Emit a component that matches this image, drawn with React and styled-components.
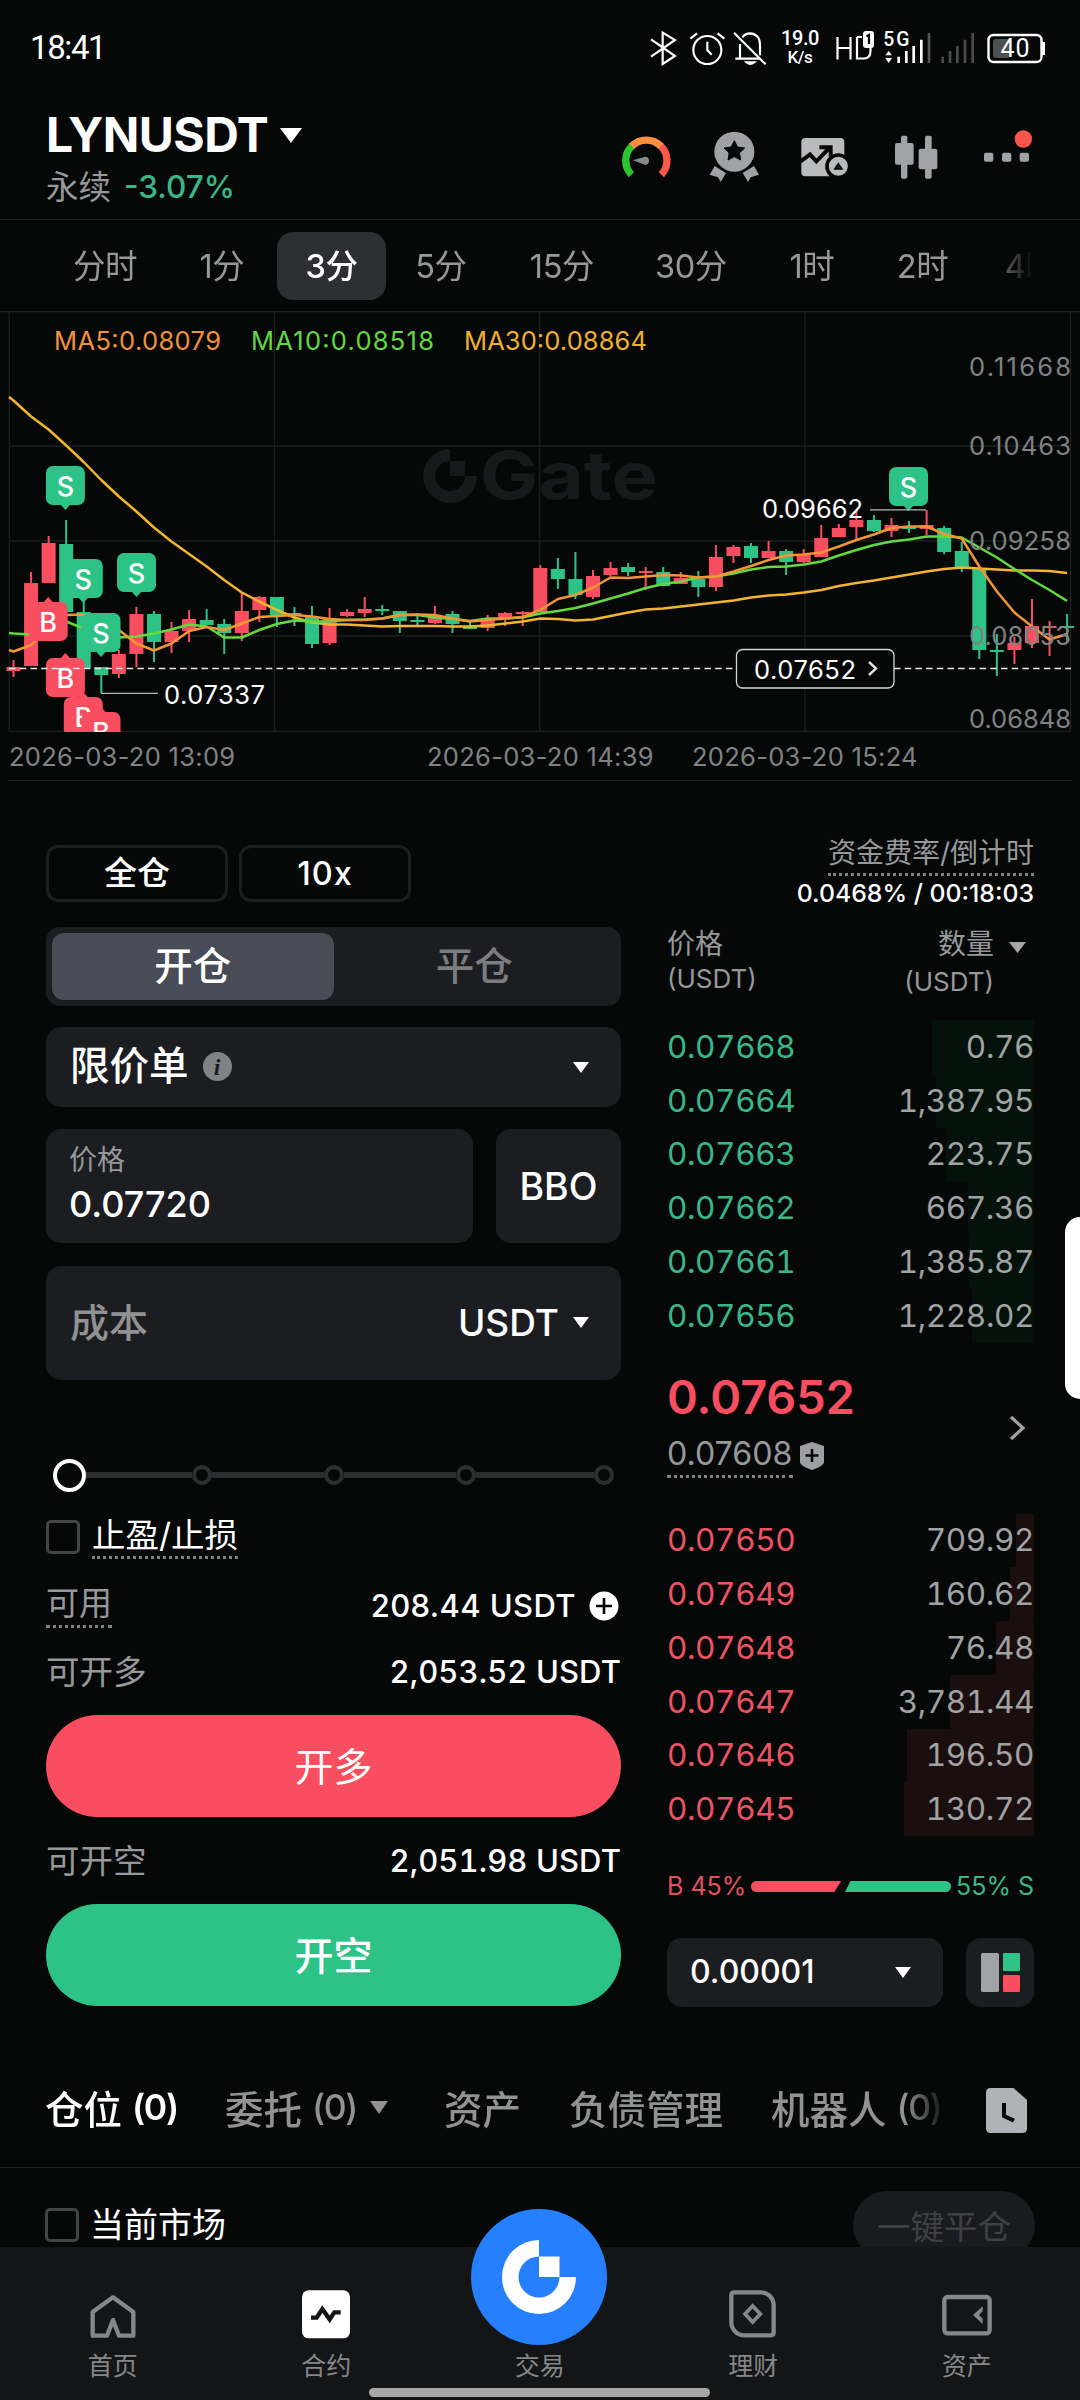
import React from "react";
import styled, { createGlobalStyle, css } from "styled-components";

const color = {
    bg: "#060808",
    panel: "#1c1d21",
    line: "#1d1f20",
    text: "#ffffff",
    muted: "#96989a",
    dim: "#7b7d80",
    red: "#f94e60",
    green: "#2dc386",
    greenText: "#3ab788",
};

const GlobalStyle = createGlobalStyle`
    * {
        box-sizing: border-box;
    }

    body {
        margin: 0;
        background: ${color.bg};
        color: ${color.text};
        font-family: Inter, "Noto Sans CJK SC", sans-serif;
    }

    svg {
        display: block;
        flex: none;
        overflow: visible;
    }
`;

const Page = styled.div`
    position: relative;
    width: 1080px;
    height: 2400px;
    overflow: hidden;
    background: ${color.bg};
`;

const Content = styled.main`
    height: 2247px;
    overflow: hidden;
`;

const Text = styled.span`
    display: inline-flex;
    align-items: center;
    white-space: pre;
    font-size: ${(p) => p.$size || 32}px;
    line-height: 1.2;
    font-weight: ${(p) => p.$weight || 400};
    letter-spacing: ${(p) => p.$ls || 0}px;
    color: ${(p) => p.$color || color.text};
    font-feature-settings: ${(p) => (p.$tnum ? '"tnum"' : "normal")};
`;

const Dotted = styled(Text)`
    height: ${(p) => p.$height || 44}px;
    border-bottom: 3px dotted #808284;
`;

/* status bar */

const StatusBar = styled.div`
    display: flex;
    align-items: center;
    justify-content: space-between;
    height: 94px;
    padding: 1px 35px 0 30px;
`;

const Clock = styled.span`
    font-family: Roboto, sans-serif;
    font-size: 33px;
    letter-spacing: -1.4px;
`;

const StatusIcons = styled.div`
    display: flex;
    align-items: center;
    height: 36px;
`;

const Speed = styled.div`
    width: 42px;
    margin: 0 15px 0 11px;
    font-family: Roboto, sans-serif;
    font-weight: 500;
    text-align: center;
    font-size: 20px;
    line-height: 19px;
    letter-spacing: -0.4px;

    small {
        display: block;
        font-size: 17px;
        line-height: 18px;
    }
`;

/* header */

const Header = styled.header`
    display: flex;
    align-items: center;
    justify-content: space-between;
    height: 126px;
    padding: 0 47px 0 46px;
    border-bottom: 1px solid ${color.line};
`;

const Pair = styled.div`
    display: flex;
    align-items: center;
    gap: 12px;
    height: 61px;
`;

const Change = styled.div`
    display: flex;
    align-items: center;
    gap: 13px;
    height: 43px;
`;

const Actions = styled.div`
    display: flex;
    gap: 40.5px;
`;

const Caret = styled.i`
    flex: none;
    width: 0;
    height: 0;
    border: ${(p) => p.$w / 2}px solid transparent;
    border-top: ${(p) => p.$h}px solid ${(p) => p.$color || "#fff"};
    border-bottom: 0;
`;

/* interval tabs */

const Intervals = styled.nav`
    display: flex;
    align-items: center;
    width: 1032px;
    height: 91px;
    padding-left: 43px;
    overflow: hidden;
    -webkit-mask-image: linear-gradient(90deg, #000 985px, transparent 1034px);
    mask-image: linear-gradient(90deg, #000 985px, transparent 1034px);
`;

const Interval = styled.span`
    flex: none;
    display: flex;
    align-items: center;
    justify-content: center;
    width: ${(p) => p.$width}px;
    height: 68px;
    padding-bottom: 4px;
    border-radius: 16px;
    font-size: 32.5px;
    letter-spacing: -0.4px;
    color: ${color.muted};
    ${(p) =>
        p.$active &&
        css`
            background: #2e2f33;
            color: #fff;
            font-weight: 500;
        `}
`;

/* chart */

const ChartSvg = styled.svg`
    overflow: hidden;
    font-family: Inter, sans-serif;
`;

const Dates = styled.div`
    display: flex;
    align-items: center;
    height: 49px;
    margin: 0 8px;
    padding: 3px 0 0 1px;
    border-bottom: 1px solid ${color.line};

    span {
        width: 225px;
    }

    span:nth-child(2) {
        margin: 0 40px 0 193px;
    }
`;

/* trade area */

const Trade = styled.section`
    display: grid;
    grid-template-columns: 575px 367px;
    column-gap: 46px;
    height: 1273px;
    padding: 0 46px;
`;

const Form = styled.div`
    padding-top: 64px;
`;

const Row = styled.div`
    display: flex;
    align-items: center;
    justify-content: ${(p) => (p.$between ? "space-between" : "flex-start")};
    gap: ${(p) => p.$gap || 0}px;
    height: ${(p) => (p.$height ? `${p.$height}px` : "auto")};
    margin-top: ${(p) => p.$mt || 0}px;
`;

const Outline = styled.div`
    display: flex;
    align-items: center;
    justify-content: center;
    width: ${(p) => p.$width}px;
    height: 57px;
    border: 3px solid #1c1e20;
    border-radius: 12px;
`;

const Segment = styled.div`
    display: flex;
    height: 79px;
    margin-top: 25px;
    padding: 6px;
    border-radius: 14px;
    background: ${color.panel};
`;

const SegmentItem = styled.div`
    flex: 1;
    display: flex;
    align-items: center;
    justify-content: center;
    border-radius: 12px;
    background: ${(p) => (p.$active ? "#484c56" : "transparent")};
`;

const Box = styled.div`
    display: flex;
    align-items: center;
    flex: ${(p) => (p.$width ? "none" : 1)};
    width: ${(p) => (p.$width ? `${p.$width}px` : "auto")};
    height: ${(p) => p.$height}px;
    margin-top: ${(p) => p.$mt || 0}px;
    padding: ${(p) => p.$pad || "0 32px 0 24px"};
    justify-content: ${(p) => p.$justify || "space-between"};
    border-radius: 15px;
    background: ${color.panel};
`;

const Field = styled.div`
    display: flex;
    flex-direction: column;
    justify-content: center;
    gap: 6px;
    width: 427px;
    height: 114px;
    padding: 0 23px 2px;
    border-radius: 15px;
    background: ${color.panel};
`;

const Info = styled.i`
    display: flex;
    align-items: center;
    justify-content: center;
    width: 29px;
    height: 29px;
    border-radius: 50%;
    background: #808287;
    color: ${color.panel};
    font: italic bold 24px/1 "Liberation Serif", serif;
`;

const Slider = styled.div`
    display: flex;
    align-items: center;
    height: 32px;
    margin: 79px 7px 0;
`;

const Handle = styled.span`
    width: 33px;
    height: 33px;
    border: 4px solid #fff;
    border-radius: 50%;
`;

const Track = styled.span`
    flex: ${(p) => p.$grow};
    height: 6px;
    background: #2d2f31;
`;

const Stop = styled.span`
    width: 20px;
    height: 20px;
    border: 4px solid #2d2f31;
    border-radius: 50%;
`;

const Checkbox = styled.span`
    width: 34px;
    height: 34px;
    border: 3px solid #424446;
    border-radius: 5px;
`;

const Submit = styled.button`
    display: block;
    width: 100%;
    height: 102px;
    margin-top: ${(p) => p.$mt}px;
    padding: 0;
    border: 0;
    border-radius: 51px;
    background: ${(p) => p.$bg};
    color: #fff;
    font: ${(p) => p.$weight || 500} 39px/1 Inter, "Noto Sans CJK SC", sans-serif;
`;

/* order book */

const Book = styled.div`
    padding-top: 53px;
`;

const Right = styled.div`
    display: flex;
    flex-direction: column;
    align-items: flex-end;
`;

const BookHead = styled.div`
    display: flex;
    justify-content: space-between;
    height: 75px;
    margin-top: 16px;
`;

const HeadCell = styled.div`
    display: flex;
    flex-direction: column;
    align-items: ${(p) => (p.$end ? "flex-end" : "flex-start")};
`;

const Level = styled.div`
    display: flex;
    align-items: center;
    justify-content: space-between;
    height: 53.75px;
    background: linear-gradient(${(p) => p.$bg}, ${(p) => p.$bg}) right / ${(p) => p.$depth}px 100% no-repeat;
`;

const Last = styled.div`
    display: flex;
    align-items: flex-start;
    justify-content: space-between;
    height: 116px;
    margin-top: 21px;
    padding: 5px 8px 0 0;
`;

const More = styled.svg`
    margin-top: 46px;
`;

const Ratio = styled.div`
    display: flex;
    align-items: center;
    justify-content: space-between;
    height: 30px;
    margin-top: 35px;
`;

/* positions */

const PositionTabs = styled.nav`
    display: flex;
    align-items: center;
    height: 114px;
    padding: 0 53px 0 45px;
    border-bottom: 1px solid ${color.line};
`;

const PositionTab = styled.span`
    flex: none;
    display: flex;
    align-items: center;
    gap: 13px;
    width: ${(p) => p.$width}px;
    font-size: 38.5px;
    font-weight: 500;
    color: ${(p) => (p.$active ? "#fff" : "#909294")};
    white-space: pre;

    b {
        font-weight: ${(p) => (p.$active ? 600 : 500)};
        font-size: 35.5px;
        letter-spacing: -1.4px;
        margin-left: -3px;
    }
`;

const Fade = styled.div`
    display: flex;
    width: 897px;
    padding-bottom: 7px;
    overflow: hidden;
    -webkit-mask-image: linear-gradient(90deg, #000 860px, transparent 902px);
    mask-image: linear-gradient(90deg, #000 860px, transparent 902px);
`;

const MarketRow = styled(Row)`
    padding: 0 45px;
`;

const CloseAll = styled.span`
    display: flex;
    align-items: center;
    justify-content: center;
    width: 182px;
    height: 68px;
    padding-bottom: 2px;
    border-radius: 34px;
    background: #1a1b1f;
    color: #3f4045;
    font-size: 33.5px;
`;

/* bottom navigation */

const BottomNav = styled.nav`
    position: relative;
    display: grid;
    grid-template-columns: repeat(5, 213.5px);
    height: 153px;
    padding: 41px 6px 0;
    background: #141517;
`;

const NavItem = styled.div`
    display: flex;
    flex-direction: column;
    align-items: center;
    gap: 6px;
    height: 100px;
    font-size: 25px;
    color: #85878a;
`;

const NavLabel = styled.span`
    line-height: 36px;
`;

const GateButton = styled.div`
    position: absolute;
    left: 471px;
    top: -38px;
    width: 136px;
    height: 136px;
    border-radius: 50%;
    background: #267fff;
`;

const HomeBar = styled.div`
    position: absolute;
    left: 369px;
    bottom: 3px;
    width: 341px;
    height: 9px;
    border-radius: 5px;
    background: #a6a6a5;
`;

const EdgeHandle = styled.div`
    position: absolute;
    left: 1065px;
    top: 1217px;
    width: 30px;
    height: 182px;
    border-radius: 20px;
    background: #fff;
`;

/* candles: [high, body top, body bottom, low, up] */
const candles = [
    [360, 367, 371, 377, 1], [272, 283, 366, 366, 1], [236, 243, 283, 283, 1], [220, 244, 312, 312, 0],
    [300, 312, 368, 368, 0], [367, 367, 375, 393, 0], [350, 354, 374, 378, 1], [307, 314, 354, 367, 1],
    [311, 314, 342, 362, 0], [322, 331, 342, 353, 1], [310, 319, 331, 342, 1], [309, 320, 325, 325, 0],
    [319, 324, 333, 354, 0], [292, 311, 333, 341, 1], [296, 297, 310, 322, 1], [297, 297, 315, 327, 0],
    [307, 313, 316, 326, 0], [306, 317, 344, 348, 0], [308, 319, 343, 345, 1], [309, 312, 316, 317, 1],
    [297, 309, 313, 317, 1], [305, 309, 311, 315, 0], [311, 311, 321, 333, 0], [313, 320, 322, 326, 0],
    [306, 315, 323, 324, 1], [311, 314, 324, 333, 0], [322, 326, 329, 329, 0], [315, 320, 328, 331, 1],
    [312, 313, 318, 326, 1], [311, 312, 314, 326, 1], [265, 268, 312, 312, 1], [258, 269, 279, 289, 0],
    [252, 279, 295, 299, 0], [270, 276, 297, 299, 1], [262, 268, 275, 276, 1], [263, 267, 272, 276, 0],
    [267, 271, 273, 290, 1], [267, 272, 286, 286, 0], [272, 278, 284, 284, 1], [271, 279, 287, 297, 0],
    [245, 257, 287, 291, 1], [245, 247, 256, 263, 1], [243, 246, 258, 263, 0], [241, 251, 258, 258, 1],
    [249, 251, 262, 275, 0], [249, 255, 262, 263, 1], [225, 238, 257, 257, 1], [224, 228, 237, 237, 1],
    [211, 220, 227, 239, 1], [215, 220, 231, 232, 0], [218, 225, 231, 237, 1], [221, 227, 229, 233, 0],
    [210, 225, 229, 235, 1], [226, 228, 252, 254, 0], [242, 251, 267, 272, 0], [268, 269, 350, 359, 0],
    [334, 350, 352, 376, 0], [337, 343, 350, 364, 1], [299, 326, 343, 348, 1], [321, 326, 328, 356, 1],
    [314, 326, 328, 342, 0],
];

const ma5 = [
    351.5, 345, 330, 315, 314.5, 318, 330, 343.5, 350.5, 343.5, 331, 327, 330, 323.5, 317, 316, 315, 316.5, 319, 320,
    320, 318.5, 315, 314.5, 315, 318.5, 321.5, 320, 318.5, 317, 310, 299, 295, 287.5, 277.5, 278, 276.5, 275, 275.5,
    277.5, 276.5, 271.5, 266, 260, 255.5, 254.5, 252.5, 246.5, 240, 234.5, 228, 226.5, 226.5, 234, 238.5, 266.5, 291.5,
    312.5, 326.5, 339.5, 334,
];
const ma10 = [
    333.5, 334.5, 328, 321.5, 328.5, 333.5, 337.5, 336.5, 333.5, 329.5, 324.5, 326.5, 337.5, 337.5, 330, 324, 320.5,
    321.5, 321.5, 320, 319.5, 318.5, 315, 315, 317.5, 319, 321, 318.5, 318.5, 317.5, 313.5, 311, 308, 303.5, 298.5,
    293.5, 288, 284, 281.5, 277.5, 276.5, 273.5, 269.5, 267, 266.5, 264.5, 261.5, 255.5, 250, 245, 241.5, 239.5, 236.5,
    236.5, 237.5, 247.5, 257.5, 269, 280, 290, 301,
];
const ma30 = [
    100.5, 116.5, 129.5, 145.5, 162, 180, 196.5, 211.5, 227.5, 241.5, 254, 266.5, 280, 292.5, 301.5, 310, 317.5, 322.5,
    324.5, 324.5, 325.5, 326.5, 326, 326, 326, 326.5, 326.5, 325.5, 323.5, 321.5, 318.5, 319, 320.5, 319.5, 316, 312.5,
    309.5, 308.5, 306.5, 304.5, 302.5, 300.5, 297.5, 295.5, 294.5, 292.5, 290, 286, 283, 280.5, 277.5, 274.5, 271.5,
    269, 267.5, 268.5, 269.5, 270.5, 270.5, 271, 273,
];

const xAt = (i) => 13.5 + 17.56 * i;
const toPoints = (list) => list.map((y, i) => `${xAt(i).toFixed(1)},${y}`).join(" ");

const marks = [
    ["S", 65.4, 166], ["S", 83.3, 259], ["S", 136.5, 253], ["S", 101, 313], ["S", 908.5, 167],
    ["B", 48.2, 302], ["B", 65.4, 358], ["B", 83.3, 397], ["B", 101, 412],
];

const Mark = ({ type, x, y }) => {
    const sell = type === "S";
    return (
        <g fill={sell ? color.green : color.red}>
            <rect x={x - 19.5} y={y} width="39" height="39" rx="7" />
            <path d={sell ? `M${x - 5} ${y + 38.5}h10l-5 5.5z` : `M${x - 5} ${y + 0.5}h10l-5 -5.5z`} />
            <text x={x} y={y + 29.5} fontSize="27" fill="#fff" fontWeight="500" textAnchor="middle">
                {type}
            </text>
        </g>
    );
};

const GateLogo = ({ fill, ...rest }) => (
    <g fill={fill} {...rest}>
        <path d="M0 -37A37 37 0 1 0 37 0H20.5A20.5 20.5 0 1 1 0 -20.5Z" />
        <path d="M0 -20.5H20.5V0H0Z" />
    </g>
);

const Chart = () => (
    <ChartSvg width="1080" height="421" viewBox="0 11 1080 421">
        <g stroke={color.line} strokeWidth="1.3">
            <path d="M0 11.5H1080M9 146H1071M9 241H1071M9 336H1071M9 431.3H1071" />
            <path d="M9.2 11V431M274.5 11V431M539.7 11V431M805 11V431M1070.5 11V431" />
        </g>
        <GateLogo fill="#17191a" transform="translate(450 176) scale(0.73)" />
        <text x="480" y="199" fontSize="66" fontWeight="700" fill="#17191a" textLength="178" lengthAdjust="spacingAndGlyphs">Gate</text>

        <svg x="9" y="11" width="1062" height="420" viewBox="9 11 1062 420" overflow="hidden">
            {candles.map(([high, top, bottom, low, up], i) => (
                <g key={i} fill={up ? color.red : color.green}>
                    <rect x={xAt(i) - 1} y={high} width="2" height={low - high} />
                    <rect x={xAt(i) - 7} y={top} width="14" height={bottom - top} />
                </g>
            ))}
            <g fill="none" strokeWidth="2.5" strokeLinejoin="round">
                <polyline points={`9,97 ${toPoints(ma30)}`} stroke="#f3b52c" />
                <polyline points={`9,333 ${toPoints(ma10)}`} stroke="#62d940" />
                <polyline points={`9,350 ${toPoints(ma5)}`} stroke="#f39535" />
            </g>
        </svg>

        {marks.map(([type, x, y], i) => (
            <Mark key={i} type={type} x={x} y={y} />
        ))}

        <path d="M9 368.5H736M894 368.5H1071" stroke="#e8e8e8" strokeWidth="1.3" strokeDasharray="6.5 4.2" />
        <path d="M101 393.3H158M870 209.8H926" stroke="#b5b5b5" strokeWidth="1.3" />

        <g fontSize="25.5">
            <text x="54" y="350" dy="-300" fill="#f0923a" textLength="167">MA5:0.08079</text>
            <text x="251" y="50" fill="#62d940" textLength="183">MA10:0.08518</text>
            <text x="464" y="50" fill="#f0b02e" textLength="183">MA30:0.08864</text>
            <text x="164" y="404" fill="#fff" textLength="101">0.07337</text>
            <text x="762" y="218" fill="#fff" textLength="101">0.09662</text>
            <g fill="#808284">
                <text x="969" y="76" textLength="102">0.11668</text>
                <text x="969" y="155" textLength="102">0.10463</text>
                <text x="969" y="250" textLength="102">0.09258</text>
                <text x="969" y="345" textLength="102">0.08053</text>
                <text x="969" y="427.5" textLength="102">0.06848</text>
            </g>
            <rect x="736.5" y="349.5" width="157.5" height="38.5" rx="6" fill={color.bg} stroke="#d5d5d5" strokeWidth="1.3" />
            <text x="754" y="378.5" fill="#fff" textLength="102">0.07652</text>
        </g>
        <path d="M869 362L876 368.5L869 375" fill="none" stroke="#e0e0e0" strokeWidth="2.4" />
    </ChartSvg>
);

const AlarmIcon = styled.svg`
    margin-left: 13px;
`;

const MutedIcon = styled.svg`
    margin-left: 7px;
`;

const SignalIcon = styled.svg`
    margin-left: ${(p) => p.$ml}px;
`;

const StatusGlyphs = () => (
    <StatusIcons>
        <svg width="26" height="36" viewBox="0 0 78 108" fill="none" stroke="#fff" strokeWidth="6.5">
            <path d="M3 28L75 78L38 102V8L75 30L3 80" />
        </svg>
        <AlarmIcon width="36" height="36" viewBox="0 0 108 108" fill="none" stroke="#fff" strokeWidth="6.5">
            <circle cx="55" cy="60" r="42" />
            <path d="M55 35V60L68 74M4 26L24 10M86 10L106 26" />
        </AlarmIcon>
        <MutedIcon width="36" height="36" viewBox="0 0 108 108" fill="none" stroke="#fff" strokeWidth="6.5">
            <path d="M6 8L101 103M10 86H84M24 84V42M31 22Q40 10 54 10Q84 12 84 46V76" />
            <path d="M44 97H66Q55 106 44 97Z" fill="#fff" />
        </MutedIcon>
        <Speed>
            19.0
            <small>K/s</small>
        </Speed>
        <svg width="38" height="36" viewBox="0 0 38 36" fill="none" stroke="#fff" strokeWidth="2.2">
            <path d="M1.5 7V29.5M14.5 7V29.5M1.5 18H14.5M21 7V28.5H28Q34.5 28.5 34.5 21V18M21 7H26" />
            <rect x="27" y="1" width="11" height="17" rx="3" fill="#fff" stroke="none" />
            <path d="M30.5 6.5L33 5V14" stroke={color.bg} />
        </svg>
        <SignalIcon $ml={10} width="48" height="36" viewBox="0 0 144 108">
            <text x="-2" y="48" fontFamily="Roboto, sans-serif" fontSize="58" fontWeight="500" fill="#fff" textLength="78">5G</text>
            <path d="M4 76L14 63L24 76ZM4 84L14 99L24 84Z" fill="#fff" />
            <path d="M44 80V99M67 63V99M89 48V99M112 29V99" stroke="#fff" strokeWidth="8" />
            <path d="M135 9V99" stroke="#555" strokeWidth="8" />
        </SignalIcon>
        <SignalIcon $ml={8} width="36" height="36" viewBox="0 0 108 108">
            <path d="M8 80V99M30 63V99M52 48V99M75 29V99M98 9V99" stroke="#4a4b4c" strokeWidth="8" />
        </SignalIcon>
        <SignalIcon $ml={11} width="58" height="36" viewBox="0 0 58 36">
            <rect x="1.5" y="5" width="53" height="27" rx="5" fill="none" stroke="#fff" strokeWidth="2.4" />
            <rect x="6" y="9" width="17" height="19" rx="3" fill="#4e4f50" />
            <rect x="55" y="12" width="3" height="13" fill="#fff" />
            <text x="13.5" y="27" fontFamily="Roboto, sans-serif" fontSize="25" fill="#fff" textLength="29">40</text>
        </SignalIcon>
    </StatusIcons>
);

const HeaderIcons = () => (
    <Actions>
        <svg width="50" height="50" viewBox="0 3 150 150" fill="none" strokeWidth="22">
            <path d="M31 131A61 61 0 0 1 34 44" stroke="#2cc52f" />
            <path d="M118 44A61 61 0 0 1 121 131" stroke="#f8594b" />
            <path d="M32 46A61 61 0 0 1 120 46" stroke="#fb8f40" />
            <path d="M35 88L72 77A12 12 0 1 1 72 101Z" fill="#85888b" />
        </svg>
        <svg width="50" height="50" viewBox="0 0 150 150" fill="#a0a2a5">
            <circle cx="67" cy="59" r="60" />
            <path d="M67 26L76.5 45L98 48L82.500 63L86 84L67 74L48 84L51.500 63L36 48L57.500 45Z" fill={color.bg} stroke={color.bg} strokeWidth="3" strokeLinejoin="round" />
            <path d="M8 102L42 123L26 150L18 136L-7 128ZM126 102L92 123L108 150L116 136L141 128Z" />
        </svg>
        <svg width="50" height="50" viewBox="0 0 150 150" fill="#b9bbbd">
            <rect x="-2" y="18" width="129" height="115" rx="12" />
            <path d="M-4 88L24 67L43 88L80 50M52 46H86V74" fill="none" stroke={color.bg} strokeWidth="12" />
            <circle cx="109" cy="103" r="34" fill="#b9bbbd" stroke={color.bg} strokeWidth="11" />
            <path d="M109 91L124 113H94Z" fill={color.bg} />
        </svg>
        <svg width="50" height="50" viewBox="0 0 150 150" fill="#a0a2a5">
            <rect x="24" y="11" width="19" height="129" rx="5" />
            <rect x="6" y="33" width="56" height="65" rx="6" />
            <rect x="96" y="11" width="20" height="129" rx="5" />
            <rect x="77" y="50" width="56" height="62" rx="6" />
        </svg>
        <svg width="50" height="50" viewBox="0 0 150 150" fill="#a0a2a5">
            <rect x="3" y="62" width="28" height="27" rx="6" />
            <rect x="57" y="62" width="28" height="27" rx="6" />
            <rect x="110" y="62" width="28" height="27" rx="6" />
            <circle cx="121" cy="21" r="26" fill="#f9564b" />
        </svg>
    </Actions>
);

const intervals = [
    ["分时", 124], ["1分", 110], ["3分", 109], ["5分", 110], ["15分", 132], ["30分", 126], ["1时", 116], ["2时", 105], ["4时", 112],
];

const bids = [
    ["0.07668", "0.76", 102], ["0.07664", "1,387.95", 98], ["0.07663", "223.75", 88],
    ["0.07662", "667.36", 66], ["0.07661", "1,385.87", 65], ["0.07656", "1,228.02", 62],
];

const asks = [
    ["0.07650", "709.92", 18], ["0.07649", "160.62", 24], ["0.07648", "76.48", 38],
    ["0.07647", "3,781.44", 84], ["0.07646", "196.50", 127], ["0.07645", "130.72", 130],
];

const Levels = ({ rows, bg, tone }) =>
    rows.map(([price, amount, depth]) => (
        <Level key={price} $bg={bg} $depth={depth}>
            <Text $size={31.5} $color={tone} $tnum $ls={-0.4}>{price}</Text>
            <Text $size={31.5} $color="#a0a2a4" $tnum $ls={-0.4}>{amount}</Text>
        </Level>
    ));

const OrderForm = () => (
    <Form>
        <Row $gap={11}>
            <Outline $width={182}><Text $size={33} $weight={500}>全仓</Text></Outline>
            <Outline $width={172}><Text $size={32.5} $weight={500} $ls={1}>10x</Text></Outline>
        </Row>
        <Segment>
            <SegmentItem $active><Text $size={38.5} $weight={500}>开仓</Text></SegmentItem>
            <SegmentItem><Text $size={38.5} $weight={500} $color={color.dim}>平仓</Text></SegmentItem>
        </Segment>
        <Box $height={80} $mt={21}>
            <Row $gap={14}>
                <Text $size={39.5} $weight={500}>限价单</Text>
                <Info>i</Info>
            </Row>
            <Caret $w={17} $h={11} />
        </Box>
        <Row $mt={22} $gap={23}>
            <Field>
                <Text $size={28} $color={color.muted}>价格</Text>
                <Text $size={36} $weight={500}>0.07720</Text>
            </Field>
            <Box $height={114} $pad="0" $justify="center"><Text $size={37.5} $weight={500}>BBO</Text></Box>
        </Row>
        <Box $height={114} $mt={23}>
            <Text $size={39} $weight={500} $color="#8f9193">成本</Text>
            <Row $gap={14}>
                <Text $size={37} $weight={500}>USDT</Text>
                <Caret $w={17} $h={11} />
            </Row>
        </Box>
        <Slider>
            <Handle />
            <Track $grow={106} />
            <Stop />
            <Track $grow={112} />
            <Stop />
            <Track $grow={112} />
            <Stop />
            <Track $grow={118} />
            <Stop />
        </Slider>
        <Row $mt={23} $height={45} $gap={12}>
            <Checkbox />
            <Dotted $size={33.5}>止盈/止损</Dotted>
        </Row>
        <Row $mt={24} $height={45} $between>
            <Dotted $size={33} $color={color.muted}>可用</Dotted>
            <Row $gap={13}>
                <Text $size={31} $weight={500} $ls={0.4}>208.44 USDT</Text>
                <svg width="32" height="30" viewBox="0 0 32 30">
                    <circle cx="15" cy="15" r="14.5" fill="#fff" />
                    <path d="M15 7V23M7 15H23" stroke={color.bg} strokeWidth="2.6" />
                </svg>
            </Row>
        </Row>
        <Row $mt={21} $height={46} $between>
            <Text $size={33.5} $color={color.muted}>可开多</Text>
            <Text $size={31} $weight={500} $tnum $ls={0.1}>2,053.52 USDT</Text>
        </Row>
        <Submit $mt={20} $bg={color.red} $weight={400}>开多</Submit>
        <Row $mt={21} $height={46} $between>
            <Text $size={33.5} $color={color.muted}>可开空</Text>
            <Text $size={31} $weight={500} $tnum $ls={0.1}>2,051.98 USDT</Text>
        </Row>
        <Submit $mt={20} $bg={color.green}>开空</Submit>
    </Form>
);

const OrderBook = () => (
    <Book>
        <Right>
            <Dotted $size={28} $height={42} $color={color.muted}>资金费率/倒计时</Dotted>
            <Row $height={35}><Text $size={24.8} $weight={500}>0.0468% / 00:18:03</Text></Row>
        </Right>
        <BookHead>
            <HeadCell>
                <Row $height={35}><Text $size={28} $color={color.muted}>价格</Text></Row>
                <Row $height={33}><Text $size={26} $color={color.muted}>(USDT)</Text></Row>
            </HeadCell>
            <Row $gap={15}>
                <HeadCell $end>
                    <Row $height={35}><Text $size={28} $color={color.muted}>数量</Text></Row>
                    <Row $height={40}><Text $size={26} $color={color.muted}>(USDT)</Text></Row>
                </HeadCell>
                <svg width="25" height="75" viewBox="0 0 25 75">
                    <path d="M0 15H17L8.5 26Z" fill="#a5a7a9" />
                </svg>
            </Row>
        </BookHead>
        <Row $mt={18} />
        <Levels rows={bids} bg="#04120b" tone={color.greenText} />
        <Last>
            <div>
                <Row $height={58}><Text $size={46.8} $weight={600} $color={color.red}>0.07652</Text></Row>
                <Row $height={44} $mt={7} $gap={7}>
                    <Dotted $size={32.2} $height={44} $color={color.muted}>0.07608</Dotted>
                    <svg width="24" height="28" viewBox="0 0 24 28">
                        <path d="M12 0L24 4V20Q24 24 12 28Q0 24 0 20V4Z" fill="#9da0a3" />
                        <path d="M12 7V20M5.5 13.5H18.5" stroke={color.bg} strokeWidth="2.6" />
                    </svg>
                </Row>
            </div>
            <More width="17" height="26" viewBox="0 0 17 26" fill="none" stroke="#a0a2a4" strokeWidth="3.2">
                <path d="M2 2L14 13L2 24" />
            </More>
        </Last>
        <Row $mt={34} />
        <Levels rows={asks} bg="#1a0e0f" tone="#ee5364" />
        <Ratio>
            <Text $size={25} $color="#e25060">B 45%</Text>
            <svg width="200" height="11" viewBox="0 0 200 11">
                <path d="M5.5 0H90L83.5 11H5.5A5.5 5.5 0 0 1 5.5 0Z" fill={color.red} />
                <path d="M99.5 0H194.5A5.5 5.5 0 0 1 194.5 11H94Z" fill={color.green} />
            </svg>
            <Text $size={25} $color={color.greenText}>55% S</Text>
        </Ratio>
        <Row $mt={37} $between>
            <Box $width={276} $height={69} $pad="0 32px 0 23px">
                <Text $weight={500}>0.00001</Text>
                <Caret $w={17} $h={11} />
            </Box>
            <Box $width={68} $height={69} $pad="0" $justify="center">
                <svg width="39" height="39" viewBox="0 0 39 39">
                    <rect width="18" height="39" rx="1.5" fill="#a0a2a5" />
                    <rect x="22" width="17" height="18" rx="1" fill={color.green} />
                    <rect x="22" y="22" width="17" height="17" rx="1" fill={color.red} />
                </svg>
            </Box>
        </Row>
    </Book>
);

const HistoryIcon = styled.svg`
    margin-left: 44px;
`;

const Positions = () => (
    <>
        <PositionTabs>
            <Fade>
                <PositionTab $width={180} $active>仓位<b>(0)</b></PositionTab>
                <PositionTab $width={219}>委托<b>(0)</b><Caret $w={18} $h={13} $color="#909294" /></PositionTab>
                <PositionTab $width={125}>资产</PositionTab>
                <PositionTab $width={202}>负债管理</PositionTab>
                <PositionTab $width={190}>机器人<b>(0)</b></PositionTab>
            </Fade>
            <HistoryIcon width="41" height="45" viewBox="0 0 123 135">
                <path d="M14 0H82L123 36V121Q123 135 109 135H14Q0 135 0 121V14Q0 0 14 0Z" fill="#b0b2b8" />
                <path d="M54 45V84L84 98" fill="none" stroke={color.bg} strokeWidth="12" />
            </HistoryIcon>
        </PositionTabs>
        <MarketRow $mt={23} $between>
            <Row $gap={11}>
                <Checkbox />
                <Text $size={34}>当前市场</Text>
            </Row>
            <CloseAll>一键平仓</CloseAll>
        </MarketRow>
    </>
);

const Navigation = () => (
    <BottomNav>
        <NavItem>
            <svg width="50" height="54" viewBox="0 0 150 162" fill="none" stroke="#85878a" strokeWidth="13" strokeLinejoin="round">
                <path d="M14 72L75 28L136 72V143H93L75 96L57 143H14Z" />
            </svg>
            <NavLabel>首页</NavLabel>
        </NavItem>
        <NavItem>
            <svg width="50" height="54" viewBox="0 0 150 162">
                <rect x="3" y="7" width="144" height="144" rx="20" fill="#fff" />
                <path d="M30 89H47L64 63L86 94L100 73H119" fill="none" stroke="#141517" strokeWidth="13" />
            </svg>
            <NavLabel>合约</NavLabel>
        </NavItem>
        <NavItem>
            <svg width="50" height="54" />
            <NavLabel>交易</NavLabel>
        </NavItem>
        <NavItem>
            <svg width="50" height="54" viewBox="0 0 150 162" fill="none" stroke="#85878a">
                <path d="M19 13H98A39 39 0 0 1 137 52V133Q137 142 128 142H49A39 39 0 0 1 10 103V22Q10 13 19 13Z" strokeWidth="13" />
                <path d="M74 54L97 78L74 102L51 78Z" strokeWidth="11" />
            </svg>
            <NavLabel>理财</NavLabel>
        </NavItem>
        <NavItem>
            <svg width="50" height="54" viewBox="0 0 150 162" fill="none" stroke="#85878a">
                <rect x="7" y="27" width="136" height="109" rx="10" strokeWidth="13" />
                <path d="M122 55L93 81L122 108V92L111 81L122 70Z" fill="#85878a" stroke="none" />
            </svg>
            <NavLabel>资产</NavLabel>
        </NavItem>
        <GateButton>
            <svg width="136" height="136" viewBox="-68 -68 136 136">
                <GateLogo fill="#fff" />
            </svg>
        </GateButton>
        <HomeBar />
    </BottomNav>
);

const App = () => (
    <Page>
        <GlobalStyle />
        <Content>
            <StatusBar>
                <Clock>18:41</Clock>
                <StatusGlyphs />
            </StatusBar>
            <Header>
                <div>
                    <Pair>
                        <Text $size={48} $weight={700} $ls={-0.6}>LYNUSDT</Text>
                        <Caret $w={22} $h={15} />
                    </Pair>
                    <Change>
                        <Text $size={32.5} $color={color.muted}>永续</Text>
                        <Text $size={31.5} $color={color.greenText} $weight={500}>-3.07%</Text>
                    </Change>
                </div>
                <HeaderIcons />
            </Header>
            <Intervals>
                {intervals.map(([label, width]) => (
                    <Interval key={label} $width={width} $active={label === "3分"}>{label}</Interval>
                ))}
            </Intervals>
            <Chart />
            <Dates>
                {["2026-03-20 13:09", "2026-03-20 14:39", "2026-03-20 15:24"].map((date) => (
                    <Text key={date} $size={25.5} $color="#808284" $ls={0.3}>{date}</Text>
                ))}
            </Dates>
            <Trade>
                <OrderForm />
                <OrderBook />
            </Trade>
            <Positions />
        </Content>
        <Navigation />
        <EdgeHandle />
    </Page>
);

export default App;
